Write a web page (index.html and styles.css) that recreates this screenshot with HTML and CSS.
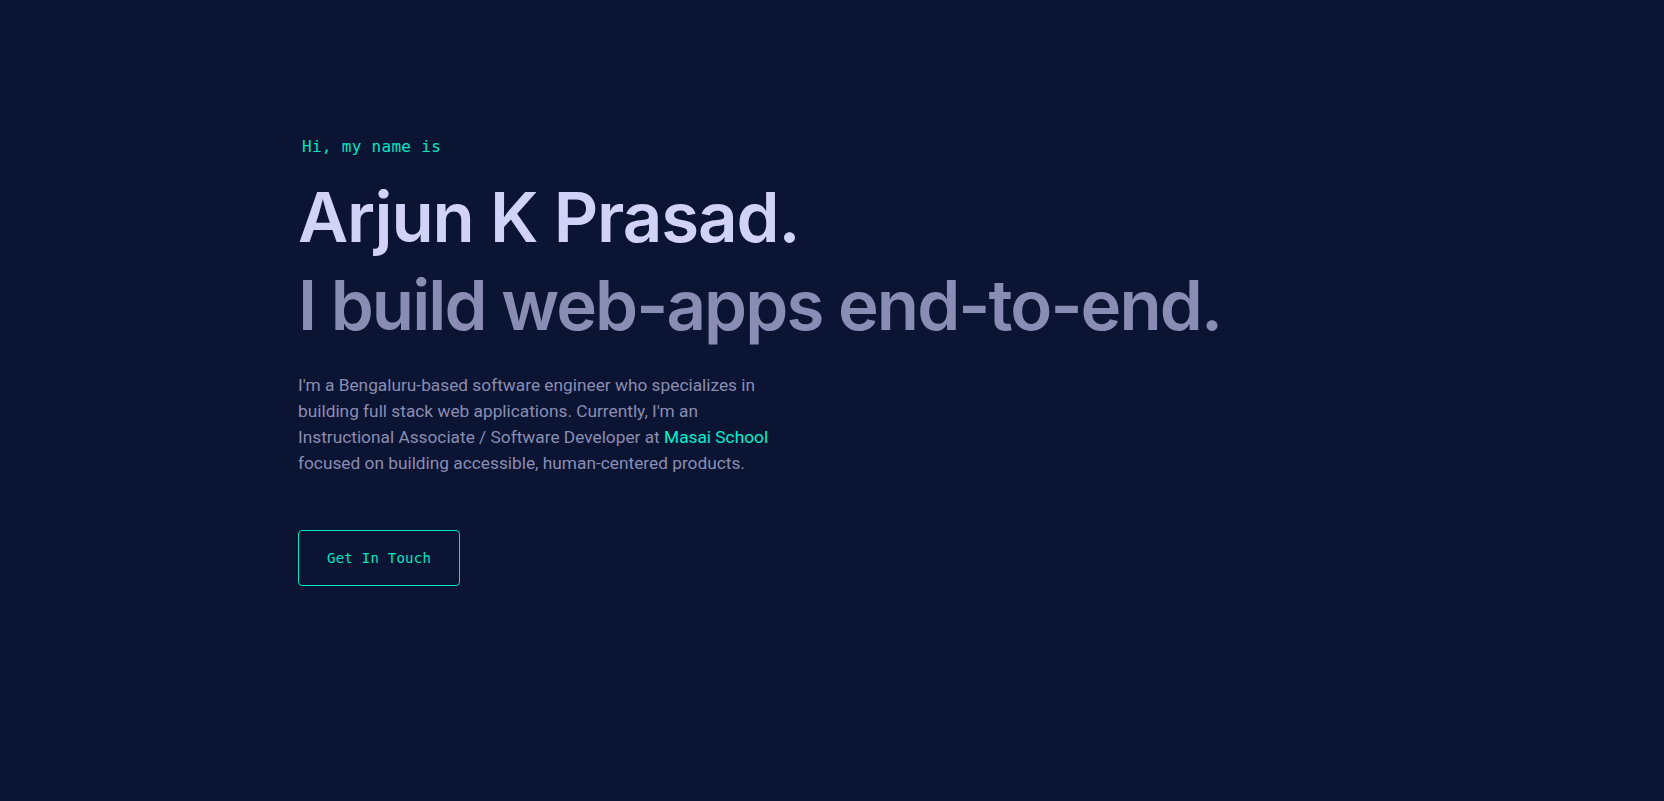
FILE: index.html
```html
<!DOCTYPE html>
<html>
<head>
    <meta charset="utf-8">
    <title>Arjun K Prasad</title>
    <link rel="stylesheet" href="styles.css">
</head>
<body>
    <main class="hero">
        <h1 class="intro">Hi, my name is</h1>
        <h2 class="big name">Arjun K Prasad.</h2>
        <h3 class="big tagline">I build web-apps end-to-end.</h3>
        <p class="about">
            I'm a Bengaluru-based software engineer who specializes in
            building full stack web applications. Currently, I'm an
            Instructional Associate / Software Developer at
            <a href="#" class="link">Masai School</a>
            focused on building accessible, human-centered products.
        </p>
        <a href="#" class="contact-btn">Get In Touch</a>
    </main>
</body>
</html>
```

FILE: styles.css
```css
body {
    margin: 0;
    background: #0b1432;
    color: #8a8db3;
    font-family: Roboto, "Liberation Sans", sans-serif;
    min-height: 100vh;
}

.hero {
    display: flex;
    flex-direction: column;
    align-items: flex-start;
    padding: 137px 0 0 298px;
}

.intro {
    margin: 0 0 16px 4px;
    color: #00e5c3;
    font-family: "DejaVu Sans Mono", monospace;
    font-size: 16px;
    font-weight: 400;
    letter-spacing: 0.3px;
    line-height: 20px;
}

.big {
    margin: 0;
    font-family: Inter, sans-serif;
    font-size: 69px;
    font-weight: 600;
    line-height: 88px;
}

.name {
    color: #d0d2f7;
    letter-spacing: -1.1px;
}

.tagline {
    color: #8a8db3;
    letter-spacing: -1.9px;
}

.about {
    margin: 23px 0 0;
    max-width: 500px;
    font-size: 17.3px;
    line-height: 26px;
}

.link {
    color: #00f0d0;
    text-decoration: none;
}

.contact-btn {
    margin-top: 54px;
    padding: 20px 28px;
    border: 1px solid #00e5c3;
    border-radius: 4px;
    color: #00e5c3;
    font-family: "DejaVu Sans Mono", monospace;
    font-size: 14px;
    letter-spacing: 0.25px;
    line-height: 14px;
    text-decoration: none;
}
```
